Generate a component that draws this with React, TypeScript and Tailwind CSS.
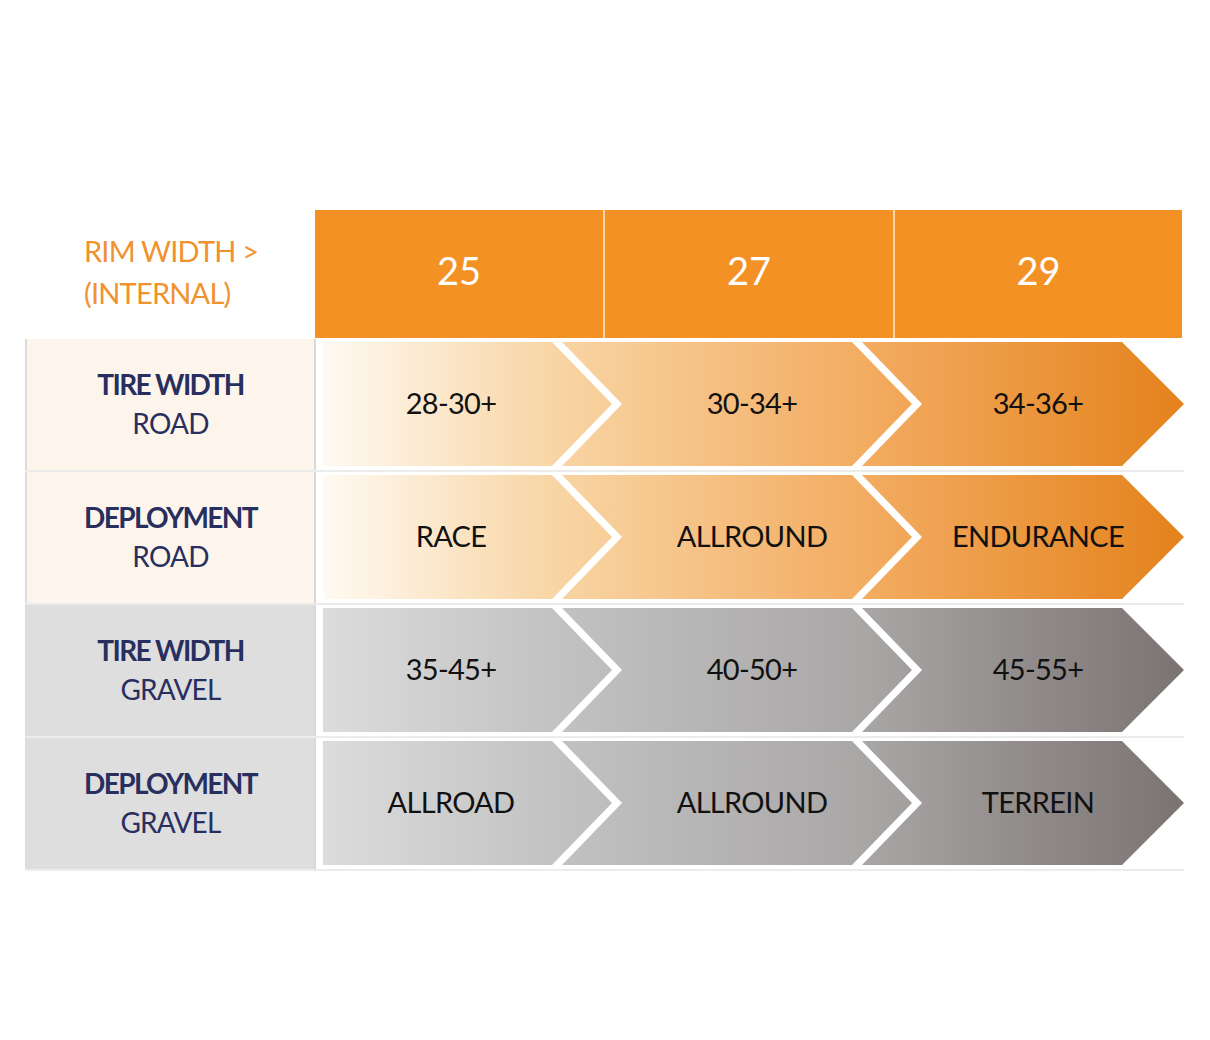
import React from "react";

type Row = {
  title: string;
  sub: string;
  labelBg: string;
  kind: "road" | "gravel";
  values: [string, string, string];
};

const rows: Row[] = [
  { title: "TIRE WIDTH", sub: "ROAD", labelBg: "bg-[#fdf5ec]", kind: "road", values: ["28-30+", "30-34+", "34-36+"] },
  { title: "DEPLOYMENT", sub: "ROAD", labelBg: "bg-[#fdf5ec]", kind: "road", values: ["RACE", "ALLROUND", "ENDURANCE"] },
  { title: "TIRE WIDTH", sub: "GRAVEL", labelBg: "bg-[#dfdede]", kind: "gravel", values: ["35-45+", "40-50+", "45-55+"] },
  { title: "DEPLOYMENT", sub: "GRAVEL", labelBg: "bg-[#dfdede]", kind: "gravel", values: ["ALLROAD", "ALLROUND", "TERREIN"] },
];

function Arrows({ kind, id }: { kind: "road" | "gravel"; id: string }) {
  const stops =
    kind === "road"
      ? [
          ["0", "#fffaf2"],
          ["0.26", "#f8d6a6"],
          ["0.62", "#f3ad63"],
          ["1", "#e4821c"],
        ]
      : [
          ["0", "#dcdcdc"],
          ["0.26", "#c3c3c3"],
          ["0.62", "#aaa7a7"],
          ["1", "#7a7372"],
        ];
  return (
    <svg className="absolute inset-0" width="868" height="131" viewBox="0 0 868 131">
      <defs>
        <linearGradient id={id} gradientUnits="userSpaceOnUse" x1="7" y1="0" x2="868" y2="0">
          {stops.map(([o, c]) => (
            <stop key={o} offset={o} stopColor={c} />
          ))}
        </linearGradient>
      </defs>
      <polygon points="7,3 236,3 296,65 236,127 7,127" fill={`url(#${id})`} />
      <polygon points="246,3 536,3 596,65 536,127 246,127 306,65" fill={`url(#${id})`} />
      <polygon points="546,3 806,3 868,65 806,127 546,127 606,65" fill={`url(#${id})`} />
    </svg>
  );
}

export default function App() {
  return (
    <div className="w-[1210px] h-[1040px] bg-white pt-[210px] font-['Lato',sans-serif]">
      {/* Header */}
      <div className="flex h-[128px]">
        <div className="w-[315px] pl-[84px] pb-[4px] flex flex-col justify-center text-[#f0922e] text-[29px] leading-[42px] font-normal tracking-[-0.8px]">
          <div>RIM WIDTH &gt;</div>
          <div>(INTERNAL)</div>
        </div>
        <div className="w-[867px] bg-[#f39124] grid grid-cols-[288px_2px_288px_2px_287px] text-white text-[38px] font-normal">
          <div className="flex items-center justify-center pb-[7px]">25</div>
          <div className="bg-[#fbd5a6]" />
          <div className="flex items-center justify-center pb-[7px]">27</div>
          <div className="bg-[#fbd5a6]" />
          <div className="flex items-center justify-center pb-[7px]">29</div>
        </div>
      </div>

      {/* Rows */}
      <div className="mt-[1px] ml-[25px] w-[1159px]">
        {rows.map((r, i) => (
          <div key={i} className="flex border-b-2 border-[#ececec] h-[133px]">
            <div
              className={`w-[291px] border-l-2 border-r-2 border-l-[#dcdcdc] border-r-[#d9d9d9] ${r.labelBg} flex flex-col items-center justify-center pb-[2px] text-[#282f5e] leading-[39px]`}
            >
              <div className="text-[28px] font-bold tracking-[-1.6px]">{r.title}</div>
              <div className="text-[28px] font-normal tracking-[-0.8px]">{r.sub}</div>
            </div>
            <div className="relative w-[868px] h-[131px]">
              <Arrows kind={r.kind} id={`g${i}`} />
              <div className="relative grid grid-cols-[270px_332px_240px] h-full items-center pb-[4px] text-[#111] text-[29px] tracking-[-0.7px]">
                {r.values.map((v, j) => (
                  <div key={j} className="text-center">
                    {v}
                  </div>
                ))}
              </div>
            </div>
          </div>
        ))}
      </div>
    </div>
  );
}
